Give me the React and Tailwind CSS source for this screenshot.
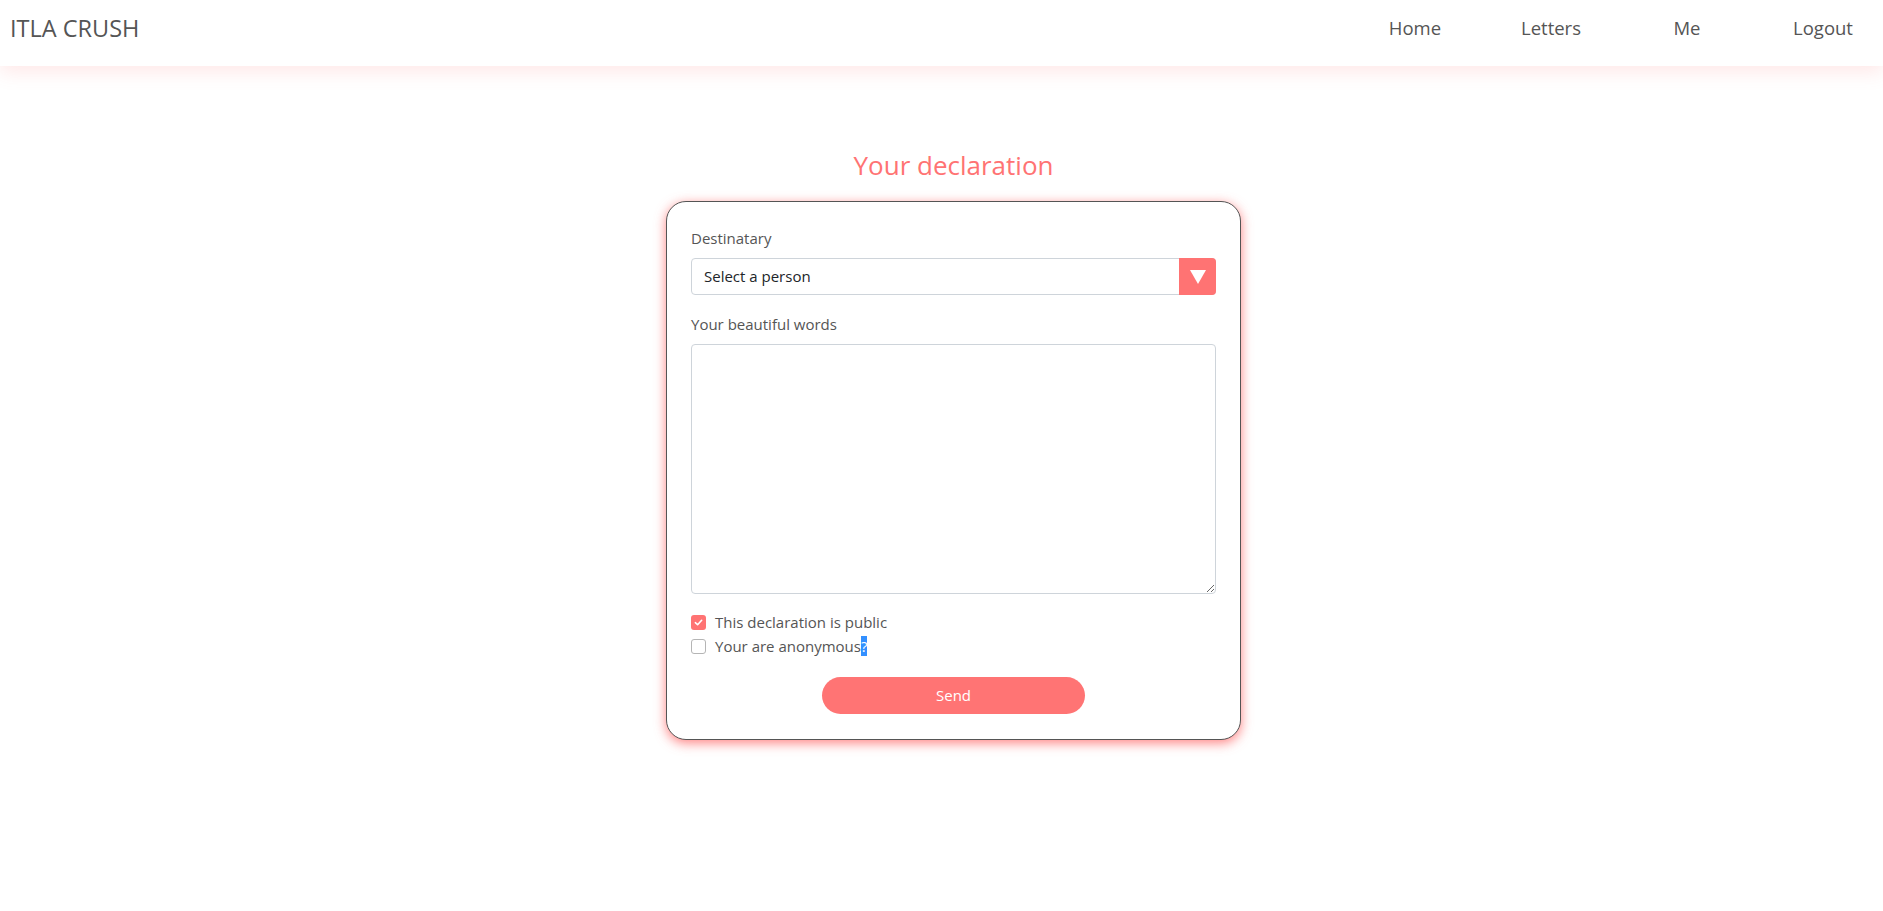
import React, { useState } from 'react';

const links = ['Home', 'Letters', 'Me', 'Logout'];

const Navbar = () => (
  <nav className="relative z-10 flex h-[66px] items-center justify-between bg-white shadow-[0_6px_18px_rgba(255,110,110,0.16)]">
    <a className="pl-[10px] pb-[8px] text-[23.5px] text-[#555]">ITLA CRUSH</a>
    <ul className="mr-[-4px] flex gap-2 pb-[10px]">
      {links.map(link => (
        <li key={link} className="w-[128px] text-center text-[18.5px] text-[#555]">
          {link}
        </li>
      ))}
    </ul>
  </nav>
);

const Checkbox = ({ checked, onChange, label, children }) => (
  <label className="flex h-[24px] items-center gap-[9px] text-[15px] text-[#555]">
    <span
      onClick={onChange}
      className={
        checked
          ? 'flex h-[15px] w-[15px] items-center justify-center rounded-[3px] bg-[#ff7373]'
          : 'flex h-[15px] w-[15px] items-center justify-center rounded-[3px] border border-[#b5b5b5] bg-white'
      }
    >
      {checked && (
        <svg width="9" height="9" viewBox="0 0 10 10">
          <path d="M1.5 5.2 L4 7.5 L8.5 2.5" fill="none" stroke="white" strokeWidth="1.8" strokeLinecap="round" strokeLinejoin="round" />
        </svg>
      )}
    </span>
    <span>{label}{children}</span>
  </label>
);

const App = () => {
  const [isPublic, setIsPublic] = useState(true);
  const [anonymous, setAnonymous] = useState(false);
  const [words, setWords] = useState('');

  return (
    <div className="min-h-screen overflow-x-hidden bg-white font-['Open_Sans',sans-serif]">
      <Navbar />

      <main className="flex flex-col items-center pl-[24px] pt-[81px]">
        <h1 className="h-[36px] text-[26px] leading-[36px] text-[#ff7373]">Your declaration</h1>

        {/* Formulaire */}
        <form
          onSubmit={e => e.preventDefault()}
          className="mt-[18px] w-[575px] rounded-[20px] border border-[#555] bg-white px-6 pt-6 pb-[25px] shadow-[0_3px_12px_rgba(255,90,90,0.75)]"
        >
          <div className="mb-2 text-[15px] leading-[24px] text-[#555]">Destinatary</div>
          <div className="flex h-[37px] items-stretch rounded-[4px] border border-[#ced4da]">
            <div className="flex flex-1 items-center pl-3 text-[15px] text-[#212529]">Select a person</div>
            <div className="-my-px -mr-px flex w-[37px] items-center justify-center rounded-r-[4px] bg-[#ff7373]">
              <svg width="18" height="16" viewBox="0 0 18 16">
                <path d="M1 1 H17 L9 15 Z" fill="white" />
              </svg>
            </div>
          </div>

          <div className="mb-2 mt-[17px] text-[15px] leading-[24px] text-[#555]">Your beautiful words</div>
          <textarea
            value={words}
            onChange={e => setWords(e.target.value)}
            className="block h-[250px] w-full rounded-[4px] border border-[#ced4da] px-3 py-2 text-[15px] outline-none"
          />

          <div className="mt-[16px]">
            <Checkbox checked={isPublic} onChange={() => setIsPublic(!isPublic)} label="This declaration is public" />
            <Checkbox checked={anonymous} onChange={() => setAnonymous(!anonymous)} label="Your are anonymous">
              <span className="bg-[#3390ff] text-white">?</span>
            </Checkbox>
          </div>

          <div className="mt-[19px] flex justify-center">
            <button type="submit" className="h-[37px] w-[263px] rounded-full bg-[#ff7474] text-[15px] text-white">
              Send
            </button>
          </div>
        </form>
      </main>
    </div>
  );
};

export default App;
